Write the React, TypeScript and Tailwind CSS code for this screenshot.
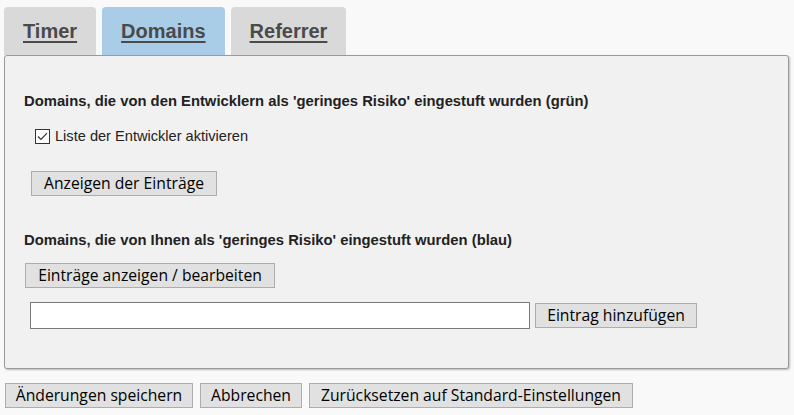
import { useState } from "react";

const tabs = ["Timer", "Domains", "Referrer"];

function Btn({ children, className = "" }: { children: React.ReactNode; className?: string }) {
  return (
    <button
      className={
        "h-[25px] border border-[#adadad] bg-[#e1e1e1] px-[8px] font-['Open_Sans',sans-serif] text-[15.7px] leading-none text-black " +
        className
      }
    >
      {children}
    </button>
  );
}

export default function App() {
  const [active] = useState("Domains");

  return (
    <div className="min-h-screen bg-[#f9f9f9] font-['Liberation_Sans',Arial,sans-serif] text-[#222]">
      {/* Tabs */}
      <div className="flex gap-[6px] pl-[4px] pt-[7px]">
        {tabs.map((t) => (
          <div
            key={t}
            className={
              "flex h-[48px] items-center rounded-t-[4px] px-[19px] text-[20px] font-bold text-[#4a4a4a] underline underline-offset-[3px] " +
              (t === active ? "bg-[#a9cde7]" : "bg-[#d9d9d9]")
            }
          >
            {t}
          </div>
        ))}
      </div>

      {/* Panel */}
      <div className="ml-[4px] h-[314px] w-[785px] rounded-[3px] border border-[#9a9a9a] bg-[#f1f1f1] pl-[19px] pt-[37px] shadow-[1px_1px_2px_rgba(0,0,0,0.25)]">
        <h2 className="text-[14.8px] font-bold leading-[16px] text-[#222]">
          Domains, die von den Entwicklern als 'geringes Risiko' eingestuft wurden (grün)
        </h2>

        <label className="mt-[19px] flex items-center pl-[11px] text-[14.6px] leading-[16px] text-[#222]">
          <span className="mr-[5px] flex h-[15px] w-[15px] items-center justify-center border border-[#333] bg-white">
            <svg width="11" height="9" viewBox="0 0 11 9" fill="none">
              <path d="M1 4.5 L4 7.5 L10 1.2" stroke="#333" strokeWidth="1.2" />
            </svg>
          </span>
          Liste der Entwickler aktivieren
        </label>

        <div className="mt-[27px] pl-[7px]">
          <Btn className="h-[24px] w-[186px]">Anzeigen der Einträge</Btn>
        </div>

        <h2 className="mt-[36px] text-[14.8px] font-bold leading-[16px] text-[#222]">
          Domains, die von Ihnen als 'geringes Risiko' eingestuft wurden (blau)
        </h2>

        <div className="mt-[15px] pl-[1px]">
          <Btn className="w-[250px]">Einträge anzeigen / bearbeiten</Btn>
        </div>

        <div className="mt-[14px] flex items-center gap-[5px] pl-[6px]">
          <input className="h-[27px] w-[500px] border border-[#7a7a7a] bg-white outline-none" />
          <Btn className="w-[162px]">Eintrag hinzufügen</Btn>
        </div>
      </div>

      {/* Footer buttons */}
      <div className="mt-[14px] flex gap-[7px] pl-[5px]">
        <Btn className="w-[188px]">Änderungen speichern</Btn>
        <Btn className="w-[102px]">Abbrechen</Btn>
        <Btn className="w-[324px]">Zurücksetzen auf Standard-Einstellungen</Btn>
      </div>
    </div>
  );
}
